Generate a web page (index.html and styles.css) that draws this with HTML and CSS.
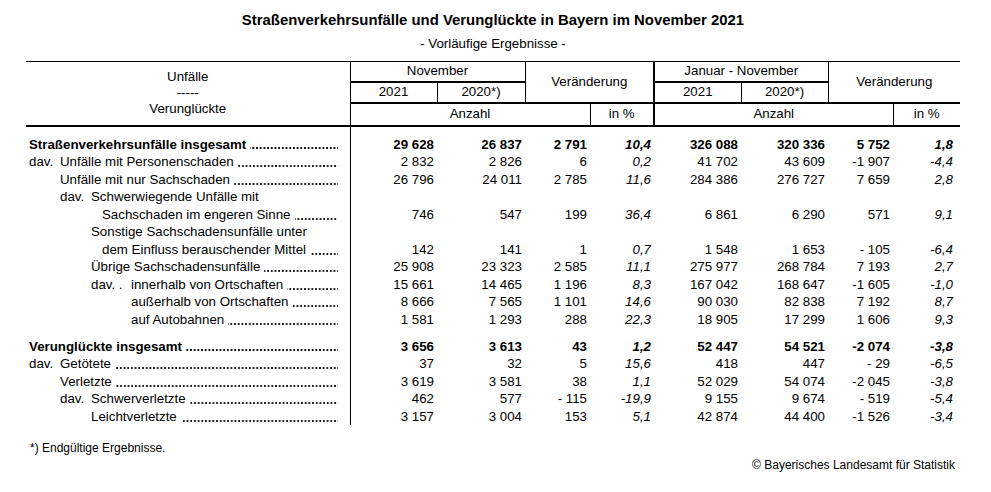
FILE: index.html
```html
<!DOCTYPE html>
<html lang="de">
<head>
<meta charset="utf-8">
<title>Straßenverkehrsunfälle Bayern November 2021</title>
<link rel="stylesheet" href="styles.css">
</head>
<body>
<div class="page">
  <h1 class="title">Straßenverkehrsunfälle und Verunglückte in Bayern im November 2021</h1>
  <p class="subtitle">- Vorläufige Ergebnisse -</p>
  <table class="stats">
    <colgroup>
      <col class="c-label"><col class="c-n"><col class="c-n2"><col class="c-v"><col class="c-p">
      <col class="c-n"><col class="c-n"><col class="c-v"><col class="c-p2">
    </colgroup>
    <thead>
      <tr class="h1">
        <th rowspan="3" class="h-label"><div>Unfälle</div><div>-----</div><div>Verunglückte</div></th>
        <th colspan="2" class="h-month">November</th>
        <th colspan="2" rowspan="2" class="h-change h-sep">Veränderung</th>
        <th colspan="2" class="h-month">Januar - November</th>
        <th colspan="2" rowspan="2" class="h-change h-last">Veränderung</th>
      </tr>
      <tr class="h2">
        <th class="h-year">2021</th>
        <th class="h-year">2020*)</th>
        <th class="h-year">2021</th>
        <th class="h-year">2020*)</th>
      </tr>
      <tr class="h3">
        <th colspan="3" class="h-unit">Anzahl</th>
        <th class="h-unit h-sep">in %</th>
        <th colspan="3" class="h-unit">Anzahl</th>
        <th class="h-unit h-last">in %</th>
      </tr>
    </thead>
    <tbody>
      <tr class="spacer-top"><td class="lab"></td><td colspan="8"></td></tr>
      <tr class="bold">
        <td class="lab"><div class="lw in0"><span class="t">Straßenverkehrsunfälle insgesamt</span><span class="dots"></span></div></td>
        <td>29 628</td><td>26 837</td><td>2 791</td><td class="pct">10,4</td><td>326 088</td><td>320 336</td><td>5 752</td><td class="pct last">1,8</td>
      </tr>
      <tr>
        <td class="lab"><div class="lw in0"><span class="dav">dav.</span><span class="t">Unfälle mit Personenschaden</span><span class="dots"></span></div></td>
        <td>2 832</td><td>2 826</td><td>6</td><td class="pct">0,2</td><td>41 702</td><td>43 609</td><td>-1 907</td><td class="pct last">-4,4</td>
      </tr>
      <tr>
        <td class="lab"><div class="lw in1"><span class="t">Unfälle mit nur Sachschaden</span><span class="dots"></span></div></td>
        <td>26 796</td><td>24 011</td><td>2 785</td><td class="pct">11,6</td><td>284 386</td><td>276 727</td><td>7 659</td><td class="pct last">2,8</td>
      </tr>
      <tr>
        <td class="lab"><div class="lw in1"><span class="dav">dav.</span><span class="t">Schwerwiegende Unfälle mit</span></div></td>
        <td></td><td></td><td></td><td class="pct"></td><td></td><td></td><td></td><td class="pct last"></td>
      </tr>
      <tr>
        <td class="lab"><div class="lw in2b"><span class="t">Sachschaden im engeren Sinne</span><span class="dots"></span></div></td>
        <td>746</td><td>547</td><td>199</td><td class="pct">36,4</td><td>6 861</td><td>6 290</td><td>571</td><td class="pct last">9,1</td>
      </tr>
      <tr>
        <td class="lab"><div class="lw in2"><span class="t">Sonstige Sachschadensunfälle unter</span></div></td>
        <td></td><td></td><td></td><td class="pct"></td><td></td><td></td><td></td><td class="pct last"></td>
      </tr>
      <tr>
        <td class="lab"><div class="lw in2b"><span class="t">dem Einfluss berauschender Mittel</span><span class="dots"></span></div></td>
        <td>142</td><td>141</td><td>1</td><td class="pct">0,7</td><td>1 548</td><td>1 653</td><td>- 105</td><td class="pct last">-6,4</td>
      </tr>
      <tr>
        <td class="lab"><div class="lw in2"><span class="t">Übrige Sachschadensunfälle</span><span class="dots"></span></div></td>
        <td>25 908</td><td>23 323</td><td>2 585</td><td class="pct">11,1</td><td>275 977</td><td>268 784</td><td>7 193</td><td class="pct last">2,7</td>
      </tr>
      <tr>
        <td class="lab"><div class="lw in2"><span class="dav dav-wide">dav. .</span><span class="t">innerhalb von Ortschaften</span><span class="dots"></span></div></td>
        <td>15 661</td><td>14 465</td><td>1 196</td><td class="pct">8,3</td><td>167 042</td><td>168 647</td><td>-1 605</td><td class="pct last">-1,0</td>
      </tr>
      <tr>
        <td class="lab"><div class="lw in3"><span class="t">außerhalb von Ortschaften</span><span class="dots"></span></div></td>
        <td>8 666</td><td>7 565</td><td>1 101</td><td class="pct">14,6</td><td>90 030</td><td>82 838</td><td>7 192</td><td class="pct last">8,7</td>
      </tr>
      <tr>
        <td class="lab"><div class="lw in3"><span class="t">auf Autobahnen</span><span class="dots"></span></div></td>
        <td>1 581</td><td>1 293</td><td>288</td><td class="pct">22,3</td><td>18 905</td><td>17 299</td><td>1 606</td><td class="pct last">9,3</td>
      </tr>
      <tr class="spacer-mid"><td class="lab"></td><td colspan="8"></td></tr>
      <tr class="bold">
        <td class="lab"><div class="lw in0"><span class="t">Verunglückte insgesamt</span><span class="dots"></span></div></td>
        <td>3 656</td><td>3 613</td><td>43</td><td class="pct">1,2</td><td>52 447</td><td>54 521</td><td>-2 074</td><td class="pct last">-3,8</td>
      </tr>
      <tr>
        <td class="lab"><div class="lw in0"><span class="dav">dav.</span><span class="t">Getötete</span><span class="dots"></span></div></td>
        <td>37</td><td>32</td><td>5</td><td class="pct">15,6</td><td>418</td><td>447</td><td>- 29</td><td class="pct last">-6,5</td>
      </tr>
      <tr>
        <td class="lab"><div class="lw in1"><span class="t">Verletzte</span><span class="dots"></span></div></td>
        <td>3 619</td><td>3 581</td><td>38</td><td class="pct">1,1</td><td>52 029</td><td>54 074</td><td>-2 045</td><td class="pct last">-3,8</td>
      </tr>
      <tr>
        <td class="lab"><div class="lw in1"><span class="dav">dav.</span><span class="t">Schwerverletzte</span><span class="dots"></span></div></td>
        <td>462</td><td>577</td><td>- 115</td><td class="pct">-19,9</td><td>9 155</td><td>9 674</td><td>- 519</td><td class="pct last">-5,4</td>
      </tr>
      <tr>
        <td class="lab"><div class="lw in2"><span class="t">Leichtverletzte</span><span class="dots"></span></div></td>
        <td>3 157</td><td>3 004</td><td>153</td><td class="pct">5,1</td><td>42 874</td><td>44 400</td><td>-1 526</td><td class="pct last">-3,4</td>
      </tr>
    </tbody>
  </table>
  <div class="foot">
    <p class="footnote">*) Endgültige Ergebnisse.</p>
    <p class="copyright">© Bayerisches Landesamt für Statistik</p>
  </div>
</div>
</body>
</html>
```

FILE: styles.css
```css
html, body {
  margin: 0;
  padding: 0;
  background: #ffffff;
}

body {
  font-family: "Liberation Sans", Arial, sans-serif;
  color: #000000;
  font-size: 13.3px;
}

.page {
  width: 934px;
  padding: 11px 0 0 26px;
}

.title {
  margin: 0;
  font-size: 14.9px;
  font-weight: bold;
  line-height: 18px;
  text-align: center;
}

.subtitle {
  margin: 7px 0 0 0;
  font-size: 13.3px;
  line-height: 16px;
  text-align: center;
}

.stats {
  margin-top: 9px;
  width: 934px;
  table-layout: fixed;
  border-collapse: collapse;
  font-size: 13.3px;
}

.c-label { width: 324px; }
.c-n { width: 87px; }
.c-n2 { width: 88px; }
.c-v { width: 65px; }
.c-p { width: 64px; }
.c-p2 { width: 67px; }

/* header */
.stats th {
  font-weight: normal;
  padding: 0;
  text-align: center;
  vertical-align: middle;
  line-height: 16px;
  border-right: 1px solid #000;
}

.stats thead tr:first-child th {
  border-top: 1px solid #000;
}

.stats .h1 { height: 20px; }
.stats .h2 { height: 21px; }
.stats .h3 { height: 23px; }

.h-label,
.h-month,
.h-year,
.h-unit {
  border-bottom: 2px solid #000;
}

.h-label {
  padding-top: 1px;
}

.h-change {
  border-bottom: 2px solid #000;
  padding-bottom: 1px;
}

.stats th.h-sep {
  border-right: 2px solid #000;
}

.stats th.h-last {
  border-right: none;
}

/* body */
.stats td {
  padding: 0 3px 0 0;
  line-height: 17.5px;
  height: 17.5px;
  text-align: right;
  white-space: nowrap;
  vertical-align: middle;
}

.stats td.last {
  padding-right: 7px;
}

.stats td.pct {
  font-style: italic;
}

.stats td.lab {
  text-align: left;
  padding: 0 12px 0 0;
  border-right: 1px solid #000;
}

.stats tr.bold td {
  font-weight: bold;
}

.stats tr.spacer-top td {
  height: 9px;
  line-height: 9px;
}

.stats tr.spacer-mid td {
  height: 9.5px;
  line-height: 9.5px;
}

.lw {
  display: flex;
  align-items: stretch;
  white-space: nowrap;
  height: 17.5px;
}

.lw .t {
  flex: none;
}

.lw .dots {
  flex: 1 1 0;
  min-width: 0;
  margin-left: 4px;
  background-image: linear-gradient(to right, #222 0, #222 1.5px, transparent 1.5px);
  background-size: 3.7px 1.5px;
  background-repeat: repeat-x;
  background-position: right 0 top 12px;
}

tr.bold .lw .dots {
  background-image: linear-gradient(to right, #111 0, #111 1.8px, transparent 1.8px);
  background-size: 3.7px 1.9px;
  background-position: right 0 top 11.5px;
}

.lw .dav {
  flex: none;
  display: inline-block;
  width: 31px;
}

.lw .dav-wide {
  width: 40px;
}

.in0 { padding-left: 3px; }
.in1 { padding-left: 34px; }
.in2 { padding-left: 65px; }
.in2b { padding-left: 76px; }
.in3 { padding-left: 105px; }

/* footer */
.foot {
  width: 925px;
  margin: 16px 0 0 4px;
  font-size: 12px;
  line-height: 14px;
}

.footnote {
  margin: 0;
}

.copyright {
  margin: 3px 0 0 0;
  text-align: right;
}
```
